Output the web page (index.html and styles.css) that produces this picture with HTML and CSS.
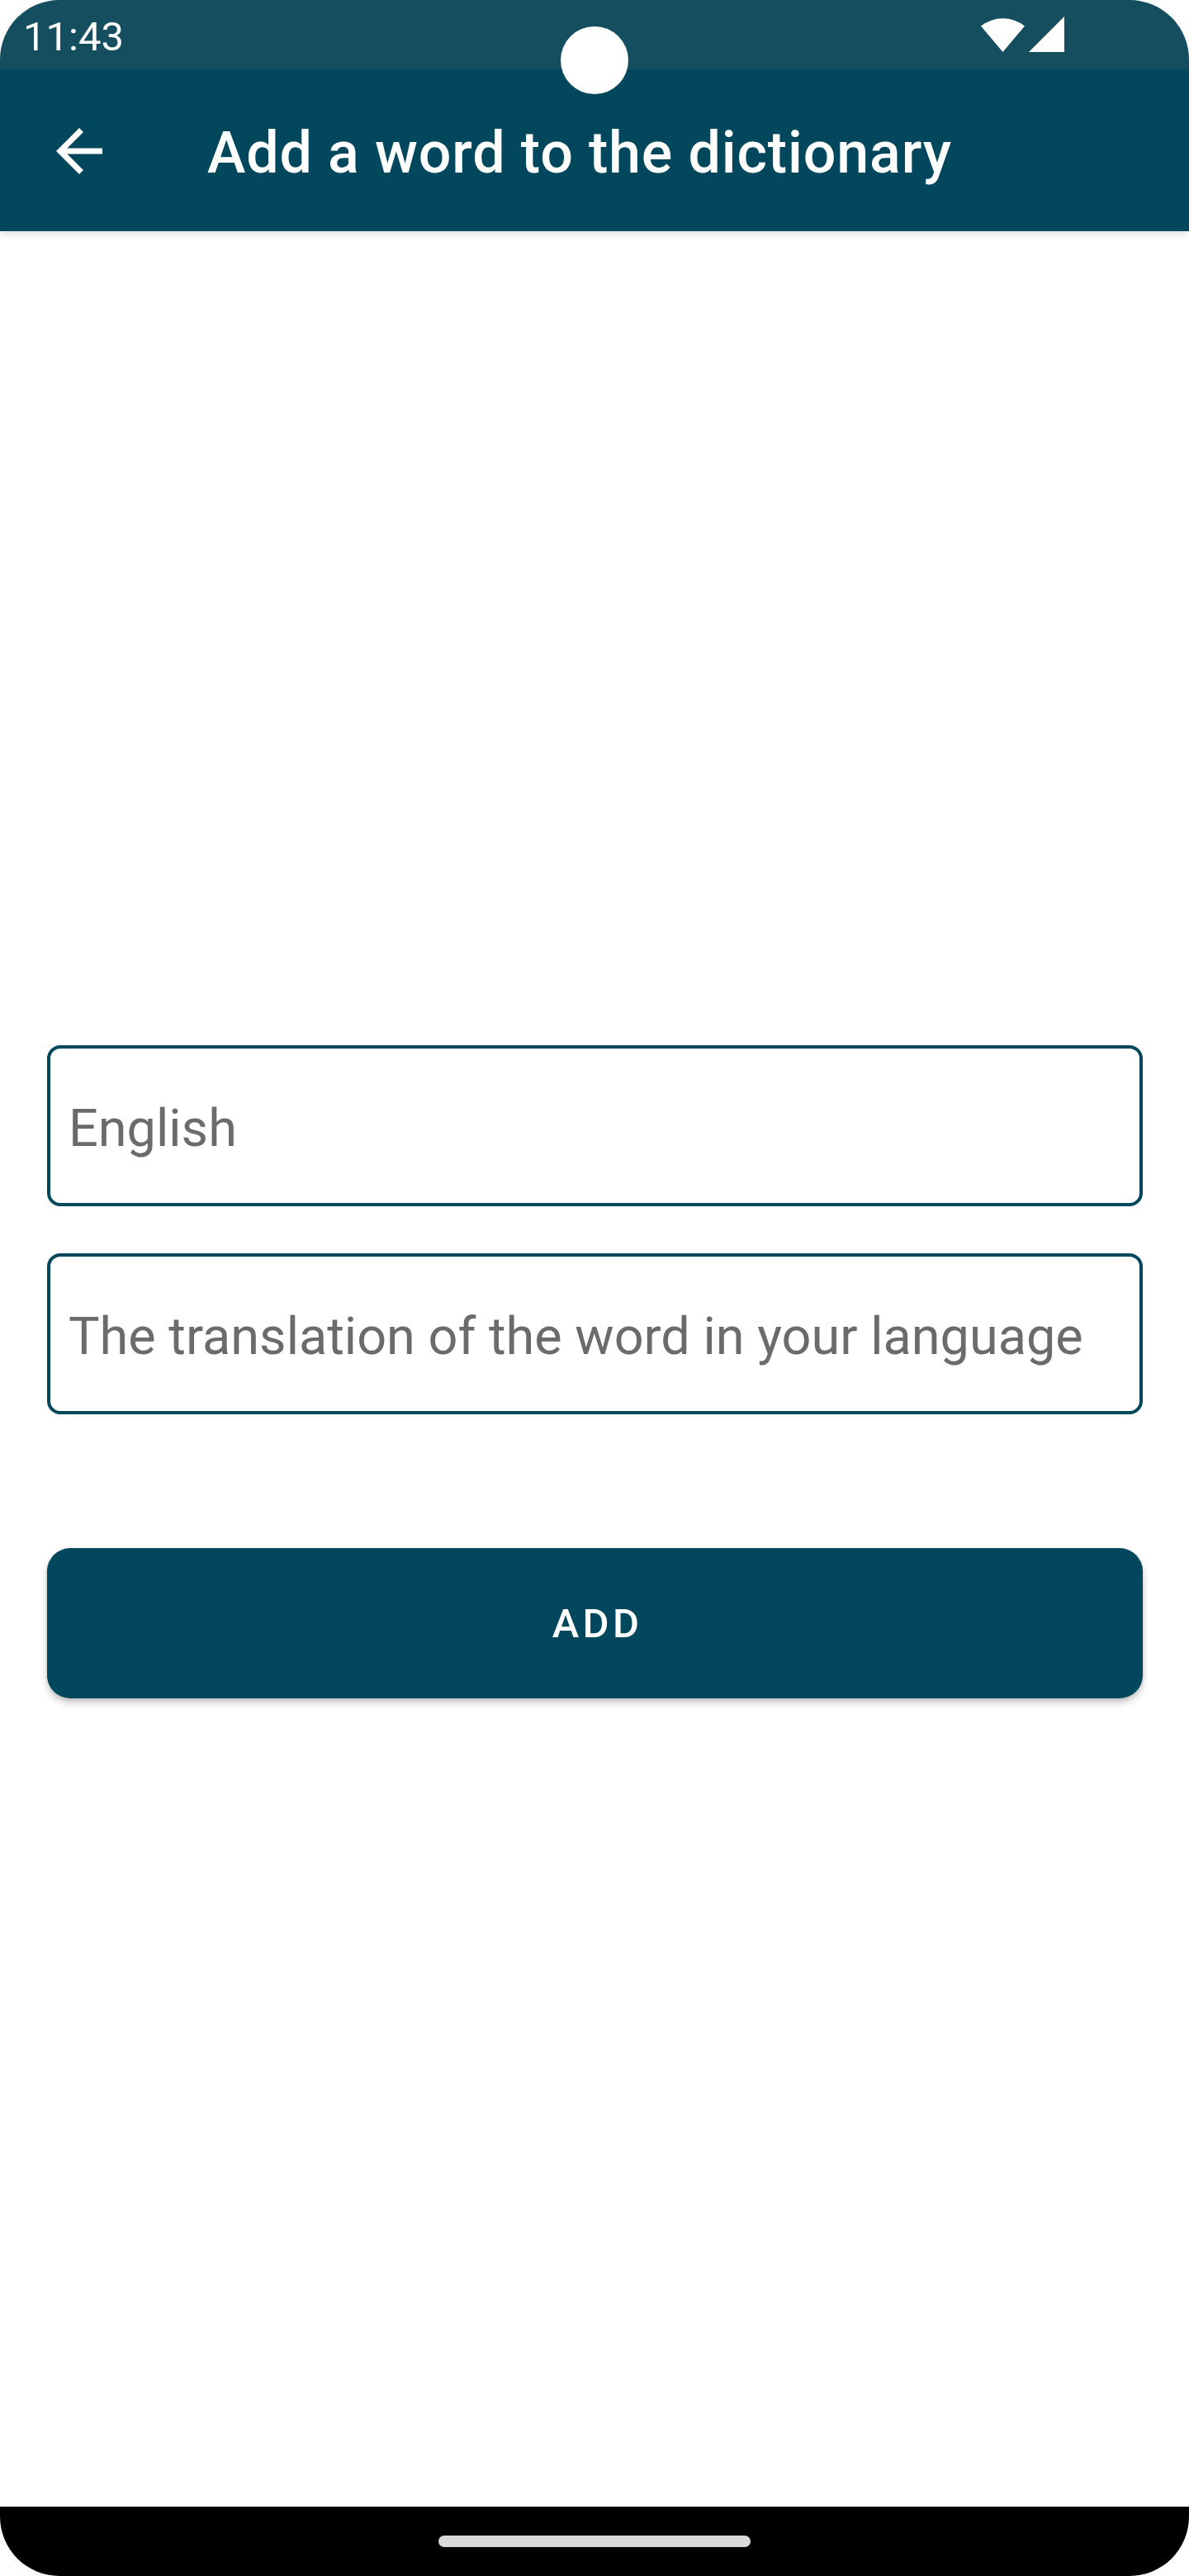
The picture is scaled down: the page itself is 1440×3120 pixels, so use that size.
FILE: index.html
```html
<!DOCTYPE html>
<html lang="en">
<head>
<meta charset="utf-8">
<title>Add a word to the dictionary</title>
<link rel="stylesheet" href="styles.css">
</head>
<body>
<div class="screen">
  <div class="statusbar">
    <span class="clock">11:43</span>
    <div class="status-icons">
      <svg class="wifi" width="53" height="44" viewBox="0 0 53 44"><path d="M26.5 44 L0 12.5 A43 43 0 0 1 53 12.5 Z" fill="#fff"/></svg>
      <svg class="signal" width="43" height="43" viewBox="0 0 43 43"><path d="M0 43 L43 0 L43 43 Z" fill="#fff"/></svg>
    </div>
  </div>
  <div class="camera"></div>
  <header class="appbar">
    <button class="back" type="button" aria-label="Back">
      <svg width="84" height="84" viewBox="0 0 24 24"><path d="M20 11H7.83l5.59-5.59L12 4l-8 8 8 8 1.41-1.41L7.83 13H20v-2z" fill="#fff"/></svg>
    </button>
    <h1 class="title">Add a word to the dictionary</h1>
  </header>
  <main class="content">
    <form class="form">
      <input class="field" type="text" placeholder="English">
      <input class="field field-second" type="text" placeholder="The translation of the word in your language">
      <button class="add" type="button">ADD</button>
    </form>
  </main>
  <div class="navbar"><div class="handle"></div></div>
</div>
</body>
</html>
```

FILE: styles.css
```css
* { box-sizing: border-box; }
html, body { margin: 0; padding: 0; background: #ffffff; }
body { font-family: Roboto, "Noto Sans", sans-serif; }

.screen {
  position: relative;
  width: 1440px;
  height: 3120px;
  border-radius: 72px;
  overflow: hidden;
  display: flex;
  flex-direction: column;
  background: #ffffff;
}

.statusbar {
  height: 84px;
  flex: none;
  background: #154f5f;
  display: flex;
  justify-content: space-between;
  align-items: flex-start;
  padding: 16px 151px 0 28px;
  color: #ffffff;
}
.clock {
  font-size: 49px;
  line-height: normal;
  font-weight: 400;
}
.status-icons {
  display: flex;
  align-items: flex-end;
  gap: 5px;
  margin-top: 3px;
  height: 44px;
}
.status-icons svg { display: block; }

.camera {
  position: absolute;
  z-index: 5;
  left: 679px;
  top: 32px;
  width: 82px;
  height: 82px;
  border-radius: 50%;
  background: #ffffff;
}

.appbar {
  position: relative;
  z-index: 1;
  height: 196px;
  flex: none;
  background: #03475d;
  display: flex;
  align-items: center;
  padding: 0 0 0 54px;
  box-shadow: 0 3px 10px rgba(0, 0, 0, 0.14);
}
.back {
  width: 84px;
  height: 84px;
  padding: 0;
  border: 0;
  background: transparent;
  margin: 2px 113px 0 0;
}
.back svg { display: block; }
.title {
  margin: 0;
  padding-top: 6px;
  color: #ffffff;
  font-size: 70px;
  font-weight: 500;
  line-height: normal;
  letter-spacing: 0.85px;
}

.content {
  flex: 1;
  display: flex;
  flex-direction: column;
  justify-content: center;
  padding: 7px 56px 0 57px;
}
.form {
  display: flex;
  flex-direction: column;
}
.field {
  width: 100%;
  height: 195px;
  border: 4px solid #03475d;
  border-radius: 16px;
  padding: 6px 22px 0 22px;
  font-family: Roboto, "Noto Sans", sans-serif;
  font-size: 63px;
  color: #222222;
  background: #ffffff;
  outline: none;
}
.field::placeholder {
  color: #6b6b6b;
  opacity: 1;
}
.field-second { margin-top: 57px; }

.add {
  margin-top: 162px;
  height: 182px;
  width: 100%;
  border: 0;
  border-radius: 28px;
  padding: 0 0 0 6px;
  background: #03475d;
  color: #ffffff;
  font-family: Roboto, "Noto Sans", sans-serif;
  font-size: 49px;
  font-weight: 500;
  letter-spacing: 4.4px;
  box-shadow: 0 6px 10px rgba(0, 0, 0, 0.18), 0 2px 4px rgba(0, 0, 0, 0.12);
}

.navbar {
  height: 84px;
  flex: none;
  background: #000000;
  display: flex;
  justify-content: center;
  padding-top: 35px;
}
.handle {
  width: 378px;
  height: 14px;
  border-radius: 7px;
  background: #d9d9d9;
}
```
